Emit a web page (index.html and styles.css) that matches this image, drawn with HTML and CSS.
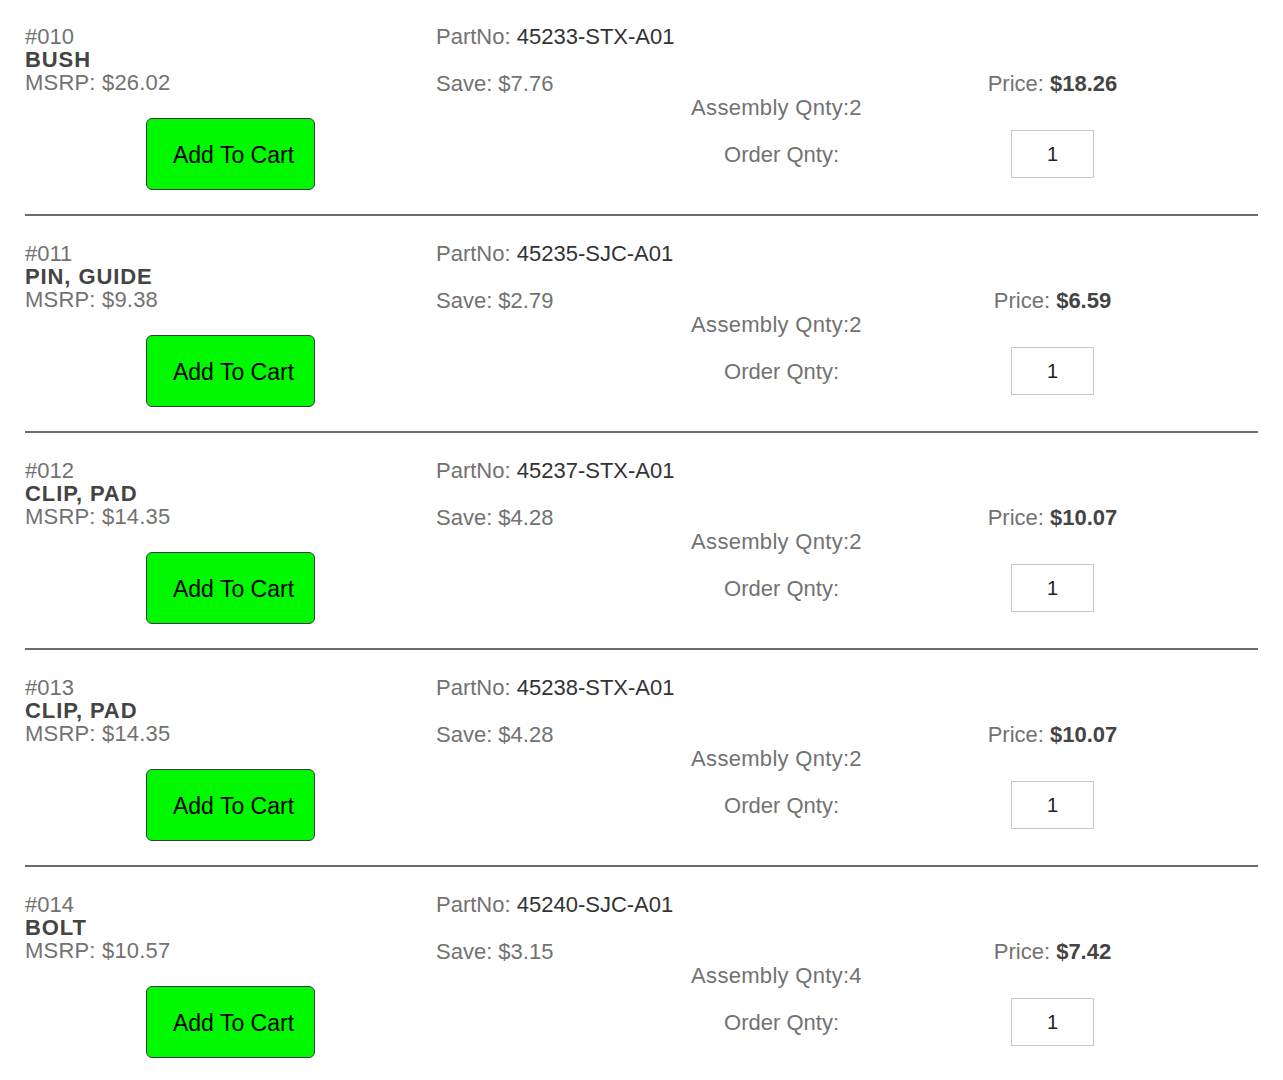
FILE: index.html
```html
<!DOCTYPE html>
<html lang="en">
<head>
<meta charset="utf-8">
<title>Parts</title>
<link rel="stylesheet" href="styles.css">
</head>
<body>
<div class="list">

  <div class="item">
    <div class="col-info">
      <div class="num">#010</div>
      <div class="name">BUSH</div>
      <div class="msrp">MSRP: $26.02</div>
      <button class="cart" type="button">Add To Cart</button>
    </div>
    <div class="col-detail">
      <div class="partno">PartNo: <span class="pn">45233-STX-A01</span></div>
      <div class="pricing">
        <div class="save">Save: $7.76</div>
        <div class="price">Price: <b>$18.26</b></div>
      </div>
      <div class="assembly">Assembly Qnty:2</div>
      <div class="order">
        <div class="order-label">Order Qnty:</div>
        <div class="qty-cell"><input class="qty" type="text" value="1"></div>
      </div>
    </div>
  </div>

  <div class="item">
    <div class="col-info">
      <div class="num">#011</div>
      <div class="name">PIN, GUIDE</div>
      <div class="msrp">MSRP: $9.38</div>
      <button class="cart" type="button">Add To Cart</button>
    </div>
    <div class="col-detail">
      <div class="partno">PartNo: <span class="pn">45235-SJC-A01</span></div>
      <div class="pricing">
        <div class="save">Save: $2.79</div>
        <div class="price">Price: <b>$6.59</b></div>
      </div>
      <div class="assembly">Assembly Qnty:2</div>
      <div class="order">
        <div class="order-label">Order Qnty:</div>
        <div class="qty-cell"><input class="qty" type="text" value="1"></div>
      </div>
    </div>
  </div>

  <div class="item">
    <div class="col-info">
      <div class="num">#012</div>
      <div class="name">CLIP, PAD</div>
      <div class="msrp">MSRP: $14.35</div>
      <button class="cart" type="button">Add To Cart</button>
    </div>
    <div class="col-detail">
      <div class="partno">PartNo: <span class="pn">45237-STX-A01</span></div>
      <div class="pricing">
        <div class="save">Save: $4.28</div>
        <div class="price">Price: <b>$10.07</b></div>
      </div>
      <div class="assembly">Assembly Qnty:2</div>
      <div class="order">
        <div class="order-label">Order Qnty:</div>
        <div class="qty-cell"><input class="qty" type="text" value="1"></div>
      </div>
    </div>
  </div>

  <div class="item">
    <div class="col-info">
      <div class="num">#013</div>
      <div class="name">CLIP, PAD</div>
      <div class="msrp">MSRP: $14.35</div>
      <button class="cart" type="button">Add To Cart</button>
    </div>
    <div class="col-detail">
      <div class="partno">PartNo: <span class="pn">45238-STX-A01</span></div>
      <div class="pricing">
        <div class="save">Save: $4.28</div>
        <div class="price">Price: <b>$10.07</b></div>
      </div>
      <div class="assembly">Assembly Qnty:2</div>
      <div class="order">
        <div class="order-label">Order Qnty:</div>
        <div class="qty-cell"><input class="qty" type="text" value="1"></div>
      </div>
    </div>
  </div>

  <div class="item">
    <div class="col-info">
      <div class="num">#014</div>
      <div class="name">BOLT</div>
      <div class="msrp">MSRP: $10.57</div>
      <button class="cart" type="button">Add To Cart</button>
    </div>
    <div class="col-detail">
      <div class="partno">PartNo: <span class="pn">45240-SJC-A01</span></div>
      <div class="pricing">
        <div class="save">Save: $3.15</div>
        <div class="price">Price: <b>$7.42</b></div>
      </div>
      <div class="assembly">Assembly Qnty:4</div>
      <div class="order">
        <div class="order-label">Order Qnty:</div>
        <div class="qty-cell"><input class="qty" type="text" value="1"></div>
      </div>
    </div>
  </div>

</div>
</body>
</html>
```

FILE: styles.css
```css
html, body {
  margin: 0;
  padding: 0;
  background: #ffffff;
}

body {
  font-family: "Liberation Sans", Arial, Helvetica, sans-serif;
  font-size: 22px;
  line-height: 23px;
  color: #727272;
}

.list {
  width: 1233px;
  margin-left: 25px;
}

.item {
  display: flex;
  padding: 25px 0 24px;
  border-bottom: 2px solid #6b6b6b;
  margin-bottom: 1px;
}

.item:last-child {
  border-bottom: none;
  padding-bottom: 0;
  margin-bottom: 0;
}

.col-info {
  width: 411px;
  display: flex;
  flex-direction: column;
  align-items: flex-start;
}

.num,
.msrp {
  color: #727272;
}

.msrp {
  letter-spacing: 0.2px;
}

.name {
  font-weight: bold;
  color: #444444;
  letter-spacing: 0.9px;
}

.cart {
  align-self: center;
  margin-top: 24px;
  width: 169px;
  height: 72px;
  box-sizing: border-box;
  background: #00f800;
  border: 1px solid #3d3843;
  border-radius: 6px;
  font-family: "Liberation Sans", Arial, Helvetica, sans-serif;
  font-size: 23px;
  color: #000000;
  padding: 2px 0 0 6px;
  cursor: pointer;
}

.col-detail {
  width: 822px;
  display: flex;
  flex-direction: column;
}

.pn {
  color: #333333;
}

.pricing {
  margin-top: 24px;
  display: grid;
  grid-template-columns: 411px 411px;
}

.price {
  text-align: center;
}

.price b {
  color: #444444;
}

.assembly {
  margin-top: 1px;
  width: 681px;
  text-align: center;
  letter-spacing: 0.3px;
}

.order {
  margin-top: 11px;
  display: grid;
  grid-template-columns: 411px 411px;
  align-items: center;
  height: 48px;
}

.order-label {
  text-align: right;
  padding-right: 8px;
}

.qty-cell {
  display: flex;
  justify-content: center;
}

.qty {
  width: 83px;
  height: 48px;
  box-sizing: border-box;
  border: 1px solid #c8c8c8;
  padding: 0;
  margin: 0;
  text-align: center;
  font-family: "Liberation Sans", Arial, Helvetica, sans-serif;
  font-size: 20px;
  color: #222222;
  background: #ffffff;
}
```
